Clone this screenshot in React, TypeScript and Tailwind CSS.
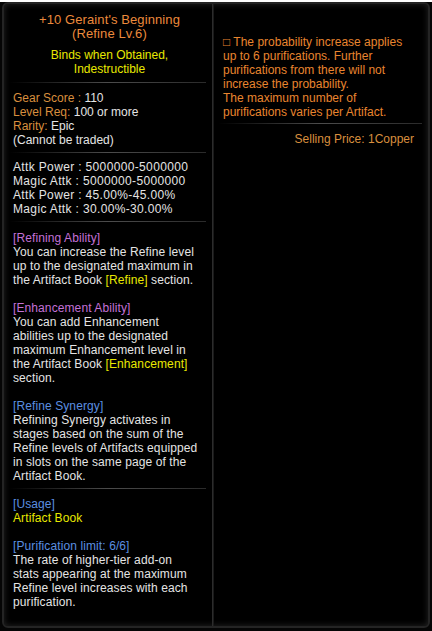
import React from 'react';

const Divider = ({ className = '' }: { className?: string }) => (
  <div className={`h-px bg-gradient-to-r from-transparent via-[#4c4c4c] to-[#2a2a2a] ${className}`} />
);

const Line = ({ children, className = '' }: { children: React.ReactNode; className?: string }) => (
  <div className={`h-[14px] leading-[14px] whitespace-nowrap ${className}`}>{children}</div>
);

const Blank = () => <div className="h-[14px]" />;

const App = () => {
  return (
    <div className="w-[432px] h-[631px] bg-[#050505] text-[12px] text-[#e4e4e4]" style={{ fontFamily: '"Liberation Sans", Arial, sans-serif' }}>
      <div className="relative ml-[2px] mt-[2px] w-[428px] h-[626px] rounded-[6px] border-2 border-[#242424] bg-black shadow-[inset_0_0_6px_#262626] flex overflow-hidden">
        {/* Left column */}
        <div className="w-[209px] h-full pl-[9px] pr-[4px] pt-[9px] border-r border-[#2c2c2c]">
          <div className="text-center text-[13px] tracking-[0.1px] text-[#ec8a3c] pr-[2px]">
            <Line>+10 Geraint's Beginning</Line>
            <Line>(Refine Lv.6)</Line>
          </div>
          <div className="mt-[7px] text-center text-[#e8e800] pr-[2px]">
            <Line>Binds when Obtained,</Line>
            <Line>Indestructible</Line>
          </div>
          <Divider className="mt-[6px] -ml-[4px] mr-[2px]" />
          <div className="mt-[8px]">
            <Line><span className="text-[#d98f3e]">Gear Score : </span>110</Line>
            <Line><span className="text-[#d98f3e]">Level Req: </span>100 or more</Line>
            <Line><span className="text-[#d98f3e]">Rarity: </span>Epic</Line>
            <Line>(Cannot be traded)</Line>
          </div>
          <Divider className="mt-[5px] -ml-[4px] mr-[2px]" />
          <div className="mt-[7px] tracking-[0.35px]">
            <Line>Attk Power : 5000000-5000000</Line>
            <Line>Magic Attk : 5000000-5000000</Line>
            <Line>Attk Power : 45.00%-45.00%</Line>
            <Line>Magic Attk : 30.00%-30.00%</Line>
          </div>
          <Divider className="mt-[5px] -ml-[4px] mr-[2px]" />
          <div className="mt-[9px] tracking-[0.1px]">
            <Line className="text-[#c471d6]">[Refining Ability]</Line>
            <Line>You can increase the Refine level</Line>
            <Line>up to the designated maximum in</Line>
            <Line>the Artifact Book <span className="text-[#e8e800]">[Refine]</span> section.</Line>
            <Blank />
            <Line className="text-[#c471d6]">[Enhancement Ability]</Line>
            <Line>You can add Enhancement</Line>
            <Line>abilities up to the designated</Line>
            <Line>maximum Enhancement level in</Line>
            <Line>the Artifact Book <span className="text-[#e8e800]">[Enhancement]</span></Line>
            <Line>section.</Line>
            <Blank />
            <Line className="text-[#5b8fe0]">[Refine Synergy]</Line>
            <Line>Refining Synergy activates in</Line>
            <Line>stages based on the sum of the</Line>
            <Line>Refine levels of Artifacts equipped</Line>
            <Line>in slots on the same page of the</Line>
            <Line>Artifact Book.</Line>
          </div>
          <Divider className="mt-[5px] -ml-[4px] mr-[2px]" />
          <div className="mt-[8px] tracking-[0.1px]">
            <Line className="text-[#5b8fe0]">[Usage]</Line>
            <Line className="text-[#e8e800]">Artifact Book</Line>
            <Blank />
            <Line className="text-[#5b8fe0]">[Purification limit: 6/6]</Line>
            <Line>The rate of higher-tier add-on</Line>
            <Line>stats appearing at the maximum</Line>
            <Line>Refine level increases with each</Line>
            <Line>purification.</Line>
          </div>
        </div>

        {/* Right column */}
        <div className="flex-1 h-full pl-[9px] pr-[14px] pt-[31px] border-l border-[#1a1a1a]">
          <div className="text-[#e9852f]">
            <Line>□ The probability increase applies</Line>
            <Line>up to 6 purifications. Further</Line>
            <Line>purifications from there will not</Line>
            <Line>increase the probability.</Line>
            <Line>The maximum number of</Line>
            <Line>purifications varies per Artifact.</Line>
          </div>
          <Divider className="mt-[4px] -ml-[5px] -mr-[8px]" />
          <Line className="mt-[8px] text-right text-[#d98f3e]">Selling Price: 1Copper</Line>
        </div>
      </div>
    </div>
  );
};

export default App;
